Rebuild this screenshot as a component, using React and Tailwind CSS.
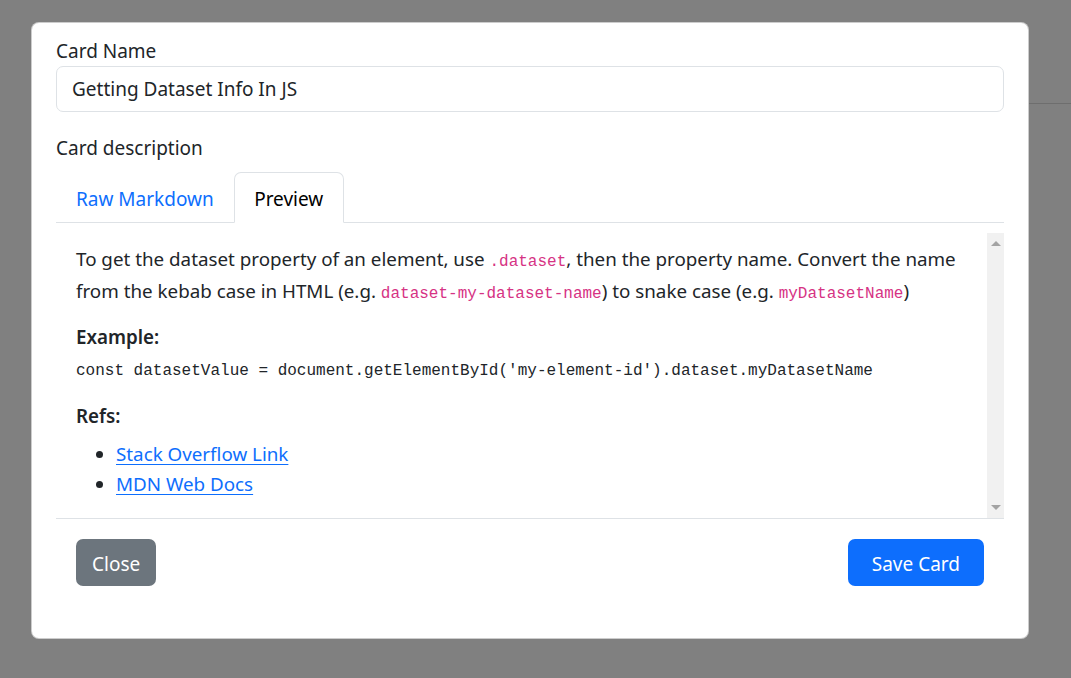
import React from 'react';

const sans = 'font-["Noto_Sans","Open_Sans",sans-serif]';
const mono = 'font-["Liberation_Mono","DejaVu_Sans_Mono",monospace]';

function Code({ children }) {
  return <code className={`${mono} text-[16px] leading-none text-[#d63384]`}>{children}</code>;
}

function FakeScrollbar() {
  return (
    <div className="w-[17px] bg-[#f1f1f1] flex flex-col justify-between items-center py-[8px] shrink-0">
      <div className="w-0 h-0 border-l-[5px] border-l-transparent border-r-[5px] border-r-transparent border-b-[5px] border-b-[#a3a3a3]" />
      <div className="w-0 h-0 border-l-[5px] border-l-transparent border-r-[5px] border-r-transparent border-t-[5px] border-t-[#a3a3a3]" />
    </div>
  );
}

export default function App() {
  return (
    <div className={`relative min-h-screen h-[678px] bg-[#808080] pt-[22px] pl-[31px] overflow-hidden ${sans}`}>
      {/* page behind the backdrop */}
      <div className="absolute left-[1029px] right-0 top-[103px] h-px bg-[#6e6e6e]" />

      <div className="relative w-[998px] bg-white rounded-[8px] border border-black/20 px-[24px] pt-[14px] pb-[52px] text-[#212529]">
        <label className="block h-[29px] leading-[29px] text-[19px]">Card Name</label>
        <div className="h-[46px] border border-[#dee2e6] rounded-[7px] px-[15px] flex items-center text-[19px]">
          Getting Dataset Info In JS
        </div>

        <label className="block mt-[22px] h-[29px] leading-[29px] text-[19px]">Card description</label>

        <div className="mt-[9px] flex border-b border-[#dee2e6] h-[51px]">
          <button className="px-[20px] pt-[4px] h-[50px] text-[19px] text-[#0d6efd]">Raw Markdown</button>
          <button className="w-[110px] h-[51px] pt-[4px] -mb-px bg-white border border-[#dee2e6] border-b-white rounded-t-[7px] text-[19px] text-black">
            Preview
          </button>
        </div>

        <div className="mt-[10px] h-[286px] border-b border-[#dee2e6] flex">
          <div className="flex-1 pl-[20px] pr-[20px] pt-[10px] text-[18.8px] text-[#212529]">
            <p className="leading-[32px]">
              To get the dataset property of an element, use <Code>.dataset</Code>, then the property name. Convert the name
              from the kebab case in HTML (e.g. <Code>dataset-my-dataset-name</Code>) to snake case (e.g. <Code>myDatasetName</Code>)
            </p>
            <p className="mt-[14px] leading-[32px] font-semibold">Example:</p>
            <p className={`mt-[6px] leading-[24px] ${mono} text-[16px] text-[#212529]`}>
              const datasetValue = document.getElementById('my-element-id').dataset.myDatasetName
            </p>
            <p className="mt-[17px] leading-[32px] font-semibold">Refs:</p>
            <ul className="mt-[7px] list-disc pl-[40px] leading-[30px]">
              <li>
                <a href="#" className="text-[#0d6efd] underline underline-offset-[3px]">Stack Overflow Link</a>
              </li>
              <li>
                <a href="#" className="text-[#0d6efd] underline underline-offset-[3px]">MDN Web Docs</a>
              </li>
            </ul>
          </div>
          <FakeScrollbar />
        </div>

        <div className="mt-[20px] px-[20px] flex justify-between">
          <button className="h-[47px] px-[16px] pt-[3px] rounded-[7px] bg-[#6c757d] text-white text-[19px]">Close</button>
          <button className="h-[47px] px-[24px] pt-[3px] rounded-[7px] bg-[#0d6efd] text-white text-[19px]">Save Card</button>
        </div>
      </div>
    </div>
  );
}
